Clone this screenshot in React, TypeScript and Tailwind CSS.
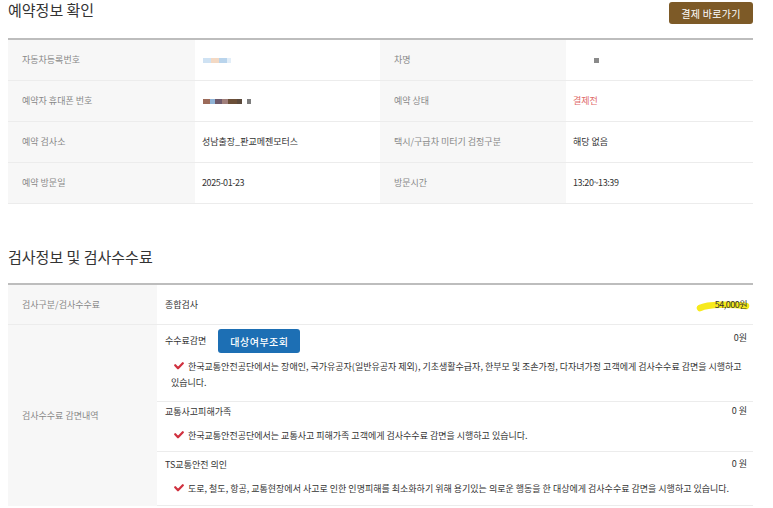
import React from "react";

const font = { fontFamily: '"Noto Sans CJK KR", "Noto Sans", sans-serif' };

function Check() {
  return (
    <svg width="10" height="8" viewBox="0 0 10 8" className="inline-block mr-[4px] ml-[3px] align-[-0px]">
      <path d="M1.2 3.2 L4 6.3 L8.8 1.2" fill="none" stroke="#d0313f" strokeWidth="2.2" strokeLinecap="round" strokeLinejoin="round" />
    </svg>
  );
}

function Cell({ children, label, className = "" }: { children?: React.ReactNode; label?: boolean; className?: string }) {
  return (
    <div
      className={
        "flex items-center h-[41px] border-b border-[#ececec] " +
        (label ? "bg-[#f7f7f7] text-[#888] pl-[14px] " : "bg-white text-[#333] pl-[7px] ") +
        className
      }
    >
      {children}
    </div>
  );
}

export default function App() {
  return (
    <div className="w-[773px] h-[508px] overflow-hidden bg-white text-[9px]" style={font}>
      <div className="ml-[8px] w-[745px]">
        <div className="flex justify-between items-start h-[38px]">
          <div className="text-[15px] leading-[20px] text-[#333]">예약정보 확인</div>
          <div className="mt-[2px] h-[22px] w-[84px] rounded-[3px] bg-[#7d5a27] text-white text-[10px] flex items-center justify-center tracking-[0.3px]">
            결제 바로가기
          </div>
        </div>
        <div className="border-t-2 border-[#bdbdbd] grid grid-cols-[187px_185px_186px_187px]">
          <Cell label>자동차등록번호</Cell>
          <Cell>
            <span className="flex gap-0 ml-[1px]">
              <span className="w-[8px] h-[5px] bg-[#cfe2f3]" />
              <span className="w-[8px] h-[5px] bg-[#f3d9c4]" />
              <span className="w-[8px] h-[5px] bg-[#b9d4ec]" />
              <span className="w-[4px] h-[5px] bg-[#e3eef8]" />
            </span>
          </Cell>
          <Cell label className="pl-[14px]">차명</Cell>
          <Cell>
            <span className="ml-[21px] w-[5px] h-[5px] bg-[#8a8a8a]" />
          </Cell>

          <Cell label>예약자 휴대폰 번호</Cell>
          <Cell>
            <span className="flex ml-[1px] items-center">
              <span className="w-[7px] h-[5px] bg-[#9c6b5a]" />
              <span className="w-[5px] h-[5px] bg-[#8fb3d6]" />
              <span className="w-[7px] h-[5px] bg-[#6f5a6a]" />
              <span className="w-[6px] h-[5px] bg-[#a07f7a]" />
              <span className="w-[9px] h-[5px] bg-[#6b4f38]" />
              <span className="w-[5px] h-[5px] bg-[#5b4a3c]" />
              <span className="ml-[5px] w-[4px] h-[5px] bg-[#7d7d7d]" />
            </span>
          </Cell>
          <Cell label>예약 상태</Cell>
          <Cell className="text-[#e06a6a]">결제전</Cell>

          <Cell label>예약 검사소</Cell>
          <Cell>성남출장_판교메젠모터스</Cell>
          <Cell label>택시/구급차 미터기 검정구분</Cell>
          <Cell>해당 없음</Cell>

          <Cell label>예약 방문일</Cell>
          <Cell className="tracking-[-0.4px]">2025-01-23</Cell>
          <Cell label>방문시간</Cell>
          <Cell className="tracking-[-0.4px]">13:20~13:39</Cell>
        </div>

        <div className="mt-[43px] text-[15px] leading-[20px] text-[#333]">검사정보 및 검사수수료</div>

        <div className="mt-[16px] border-t-2 border-[#bdbdbd] grid grid-cols-[149px_596px]">
          <div className="bg-[#f7f7f7] text-[#888] pl-[14px] h-[40px] flex items-center border-b border-[#ececec]">
            검사구분/검사수수료
          </div>
          <div className="h-[40px] flex items-center justify-between pl-[8px] pr-[6px] border-b border-[#ececec] text-[#333]">
            <span>종합검사</span>
            <span className="relative tracking-[-0.5px]">
              <svg className="absolute left-[-19px] top-[2px]" width="54" height="12" viewBox="0 0 54 12">
                <path d="M4 8 C12 4 36 4 50 6" fill="none" stroke="#f7ea1c" strokeWidth="6.5" strokeLinecap="round" />
              </svg>
              <span className="relative">54,000원</span>
            </span>
          </div>

          <div className="bg-[#f7f7f7] text-[#888] pl-[14px] flex items-center h-[181px]">검사수수료 감면내역</div>
          <div className="flex flex-col text-[#333]">
            <div className="h-[77px] border-b border-[#ececec] pl-[8px] pr-[6px] pt-[4px]">
              <div className="flex items-start justify-between">
                <div className="flex items-center">
                  <span>수수료감면</span>
                  <span className="ml-[12px] h-[24px] w-[82px] rounded-[3px] bg-[#1d6fb4] text-white text-[10px] font-medium flex items-center justify-center tracking-[0.5px]">
                    대상여부조회
                  </span>
                </div>
                <span className="mt-[2px]">0원</span>
              </div>
              <div className="pl-[6px] mt-[6px] leading-[16px] pr-[4px] break-keep">
                <Check />
                한국교통안전공단에서는 장애인, 국가유공자(일반유공자 제외), 기초생활수급자, 한부모 및 조손가정, 다자녀가정 고객에게 검사수수료 감면을 시행하고 있습니다.
              </div>
            </div>
            <div className="h-[50px] border-b border-[#ececec] pl-[8px] pr-[6px] pt-[3px]">
              <div className="flex justify-between leading-[14px]">
                <span>교통사고피해가족</span>
                <span className="mt-[-1px]">0 원</span>
              </div>
              <div className="pl-[6px] mt-[9px] leading-[16px]">
                <Check />
                한국교통안전공단에서는 교통사고 피해가족 고객에게 검사수수료 감면을 시행하고 있습니다.
              </div>
            </div>
            <div className="h-[54px] border-b border-[#ececec] pl-[8px] pr-[6px] pt-[6px]">
              <div className="flex justify-between leading-[14px]">
                <span>TS교통안전 의인</span>
                <span className="mt-[-1px]">0 원</span>
              </div>
              <div className="pl-[6px] mt-[9px] leading-[16px]">
                <Check />
                도로, 철도, 항공, 교통현장에서 사고로 인한 인명피해를 최소화하기 위해 용기있는 의로운 행동을 한 대상에게 검사수수료 감면을 시행하고 있습니다.
              </div>
            </div>
          </div>
        </div>
      </div>
    </div>
  );
}
